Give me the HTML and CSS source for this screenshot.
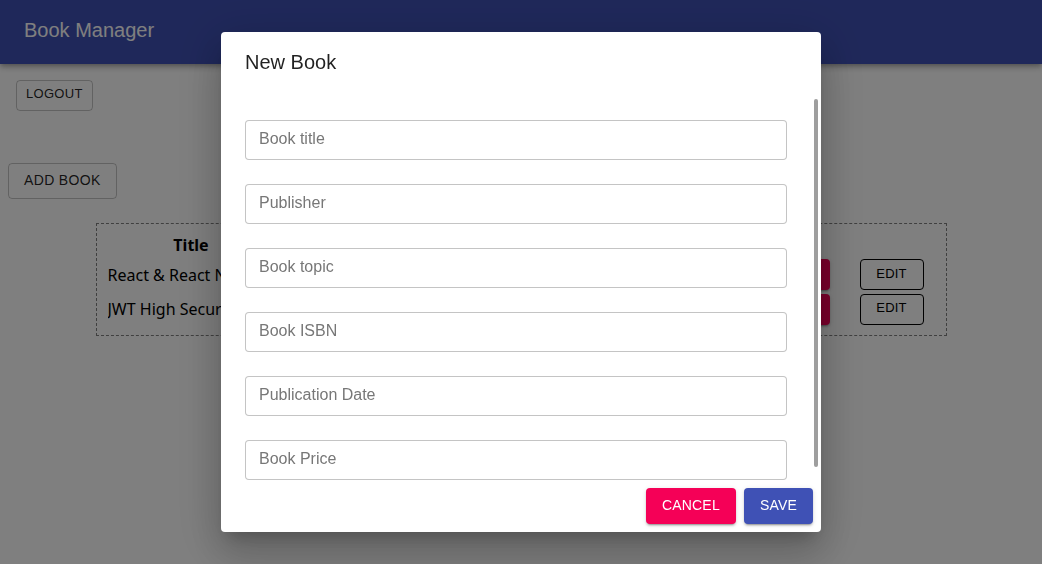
FILE: index.html
```html
<!DOCTYPE html>
<html lang="en">
<head>
<meta charset="utf-8">
<title>Book Manager</title>
<link rel="stylesheet" href="styles.css">
</head>
<body>
<header class="appbar">
  <h1 class="appbar-title">Book Manager</h1>
</header>
<main class="page">
  <div class="logout-row">
    <button class="btn btn-outlined btn-small btn-logout">Logout</button>
  </div>
  <div class="add-row">
    <button class="btn btn-outlined btn-medium">Add Book</button>
  </div>
  <div class="table-box">
    <table class="book-table">
      <colgroup>
        <col class="col-title">
        <col class="col-mid">
        <col class="col-mid">
        <col class="col-mid">
        <col class="col-del">
        <col class="col-edit">
      </colgroup>
      <thead>
        <tr>
          <th>Title</th>
          <th>Author</th>
          <th>Publisher</th>
          <th>Price</th>
          <th></th>
          <th></th>
        </tr>
      </thead>
      <tbody>
        <tr>
          <td>React &amp; React Native</td>
          <td>Adam Boduch</td>
          <td>Packt</td>
          <td>39.99</td>
          <td class="cell-right"><button class="btn btn-danger btn-small">Delete</button></td>
          <td class="cell-right"><button class="btn btn-edit btn-small">Edit</button></td>
        </tr>
        <tr>
          <td>JWT High Security</td>
          <td>John Doe</td>
          <td>Manning</td>
          <td>29.99</td>
          <td class="cell-right"><button class="btn btn-danger btn-small">Delete</button></td>
          <td class="cell-right"><button class="btn btn-edit btn-small">Edit</button></td>
        </tr>
      </tbody>
    </table>
  </div>
</main>

<div class="backdrop">
  <div class="dialog" role="dialog">
    <h2 class="dialog-title">New Book</h2>
    <div class="dialog-content">
      <input class="field" type="text" placeholder="Book title">
      <input class="field" type="text" placeholder="Publisher">
      <input class="field" type="text" placeholder="Book topic">
      <input class="field" type="text" placeholder="Book ISBN">
      <input class="field" type="text" placeholder="Publication Date">
      <input class="field" type="text" placeholder="Book Price">
    </div>
    <div class="scroll-thumb"></div>
    <div class="dialog-actions">
      <button class="btn btn-contained btn-secondary">Cancel</button>
      <button class="btn btn-contained btn-primary">Save</button>
    </div>
  </div>
</div>
</body>
</html>
```
FILE: styles.css
```css
* { box-sizing: border-box; }

html, body {
  margin: 0;
  padding: 0;
  background: #ffffff;
  font-family: "Liberation Sans", Arial, sans-serif;
}

.appbar {
  height: 64px;
  background: #3f51b5;
  color: #ffffff;
  display: flex;
  align-items: center;
  padding: 0 24px;
  box-shadow: 0 2px 4px -1px rgba(0,0,0,0.2), 0 4px 5px 0 rgba(0,0,0,0.14), 0 1px 10px 0 rgba(0,0,0,0.12);
}

.appbar-title {
  margin: 0;
  font-size: 20px;
  font-weight: 400;
  line-height: 32px;
  position: relative;
  top: -2px;
}

.page {
  padding: 0;
}

.btn {
  font-family: "Liberation Sans", Arial, sans-serif;
  text-transform: uppercase;
  letter-spacing: 0.2px;
  border-radius: 4px;
  cursor: pointer;
  display: inline-flex;
  align-items: center;
  justify-content: center;
  min-width: 64px;
  background: transparent;
  color: rgba(0,0,0,0.87);
}

.btn-small {
  height: 31px;
  padding: 0 9px 3px;
  font-size: 13px;
}

.btn-logout {
  padding-bottom: 4px;
  letter-spacing: 0.3px;
}

.btn-medium {
  height: 36px;
  padding: 0 15px 2px;
  font-size: 14px;
  letter-spacing: 0.35px;
}

.btn-outlined {
  border: 1px solid rgba(0,0,0,0.23);
}

.btn-edit {
  border: 1px solid #000000;
  color: #000000;
}

.btn-danger {
  border: none;
  background: #f50057;
  color: #ffffff;
  width: 68px;
  box-shadow: 0 3px 1px -2px rgba(0,0,0,0.2), 0 2px 2px 0 rgba(0,0,0,0.14), 0 1px 5px 0 rgba(0,0,0,0.12);
}

.logout-row {
  padding: 16px 16px 0;
}

.add-row {
  padding: 52px 8px 0;
}

.table-box {
  width: 851px;
  margin: 24px auto 0;
  border: 1px dashed #808080;
  padding: 10px 21px 9px 11px;
}

.book-table {
  width: 816px;
  table-layout: fixed;
  border-collapse: collapse;
  font-family: "Noto Sans", "DejaVu Sans", sans-serif;
  font-size: 16px;
  color: #000000;
}

.col-title { width: 166px; }
.col-mid { width: 150px; }
.col-del { width: 106px; }
.col-edit { width: 94px; }

.book-table th {
  font-weight: 700;
  height: 23px;
  line-height: 22px;
  padding: 0 0 1px 1px;
  text-align: center;
}

.book-table td {
  height: 35px;
  padding: 0;
  vertical-align: middle;
  white-space: nowrap;
  overflow: hidden;
}

.book-table tbody tr:last-child td {
  height: 34px;
}

.book-table .cell-right {
  text-align: right;
  overflow: visible;
}

.backdrop {
  position: fixed;
  inset: 0;
  background: rgba(0,0,0,0.5);
  display: flex;
  align-items: center;
  justify-content: center;
}

.dialog {
  position: relative;
  width: 600px;
  height: 500px;
  background: #ffffff;
  border-radius: 4px;
  display: flex;
  flex-direction: column;
  box-shadow: 0 11px 15px -7px rgba(0,0,0,0.2), 0 24px 38px 3px rgba(0,0,0,0.14), 0 9px 46px 8px rgba(0,0,0,0.12);
}

.dialog-title {
  margin: 0;
  padding: 16px 24px;
  font-size: 20px;
  font-weight: 400;
  line-height: 28px;
  height: 64px;
  color: rgba(0,0,0,0.87);
}

.dialog-content {
  flex: 1;
  overflow: hidden;
  padding: 24px 24px 20px;
  display: flex;
  flex-direction: column;
  gap: 24px;
}

.scroll-thumb {
  position: absolute;
  right: 3px;
  top: 67px;
  width: 4px;
  height: 368px;
  border-radius: 2px;
  background: #9e9e9e;
}

.field {
  flex: none;
  width: 542px;
  height: 40px;
  border: 1px solid rgba(0,0,0,0.23);
  border-radius: 4px;
  padding: 0 13px 2px;
  font-family: "Liberation Sans", Arial, sans-serif;
  font-size: 16px;
  color: rgba(0,0,0,0.87);
  outline: none;
}

.field::placeholder {
  color: #777777;
  opacity: 1;
}

.dialog-actions {
  flex: none;
  display: flex;
  justify-content: flex-end;
  gap: 8px;
  padding: 8px;
}

.btn-contained {
  height: 36px;
  padding: 0 16px 3px;
  font-size: 14px;
  border: none;
  color: #ffffff;
  box-shadow: 0 3px 1px -2px rgba(0,0,0,0.2), 0 2px 2px 0 rgba(0,0,0,0.14), 0 1px 5px 0 rgba(0,0,0,0.12);
}

.btn-secondary { background: #f50057; }
.btn-primary { background: #3f51b5; }
```
